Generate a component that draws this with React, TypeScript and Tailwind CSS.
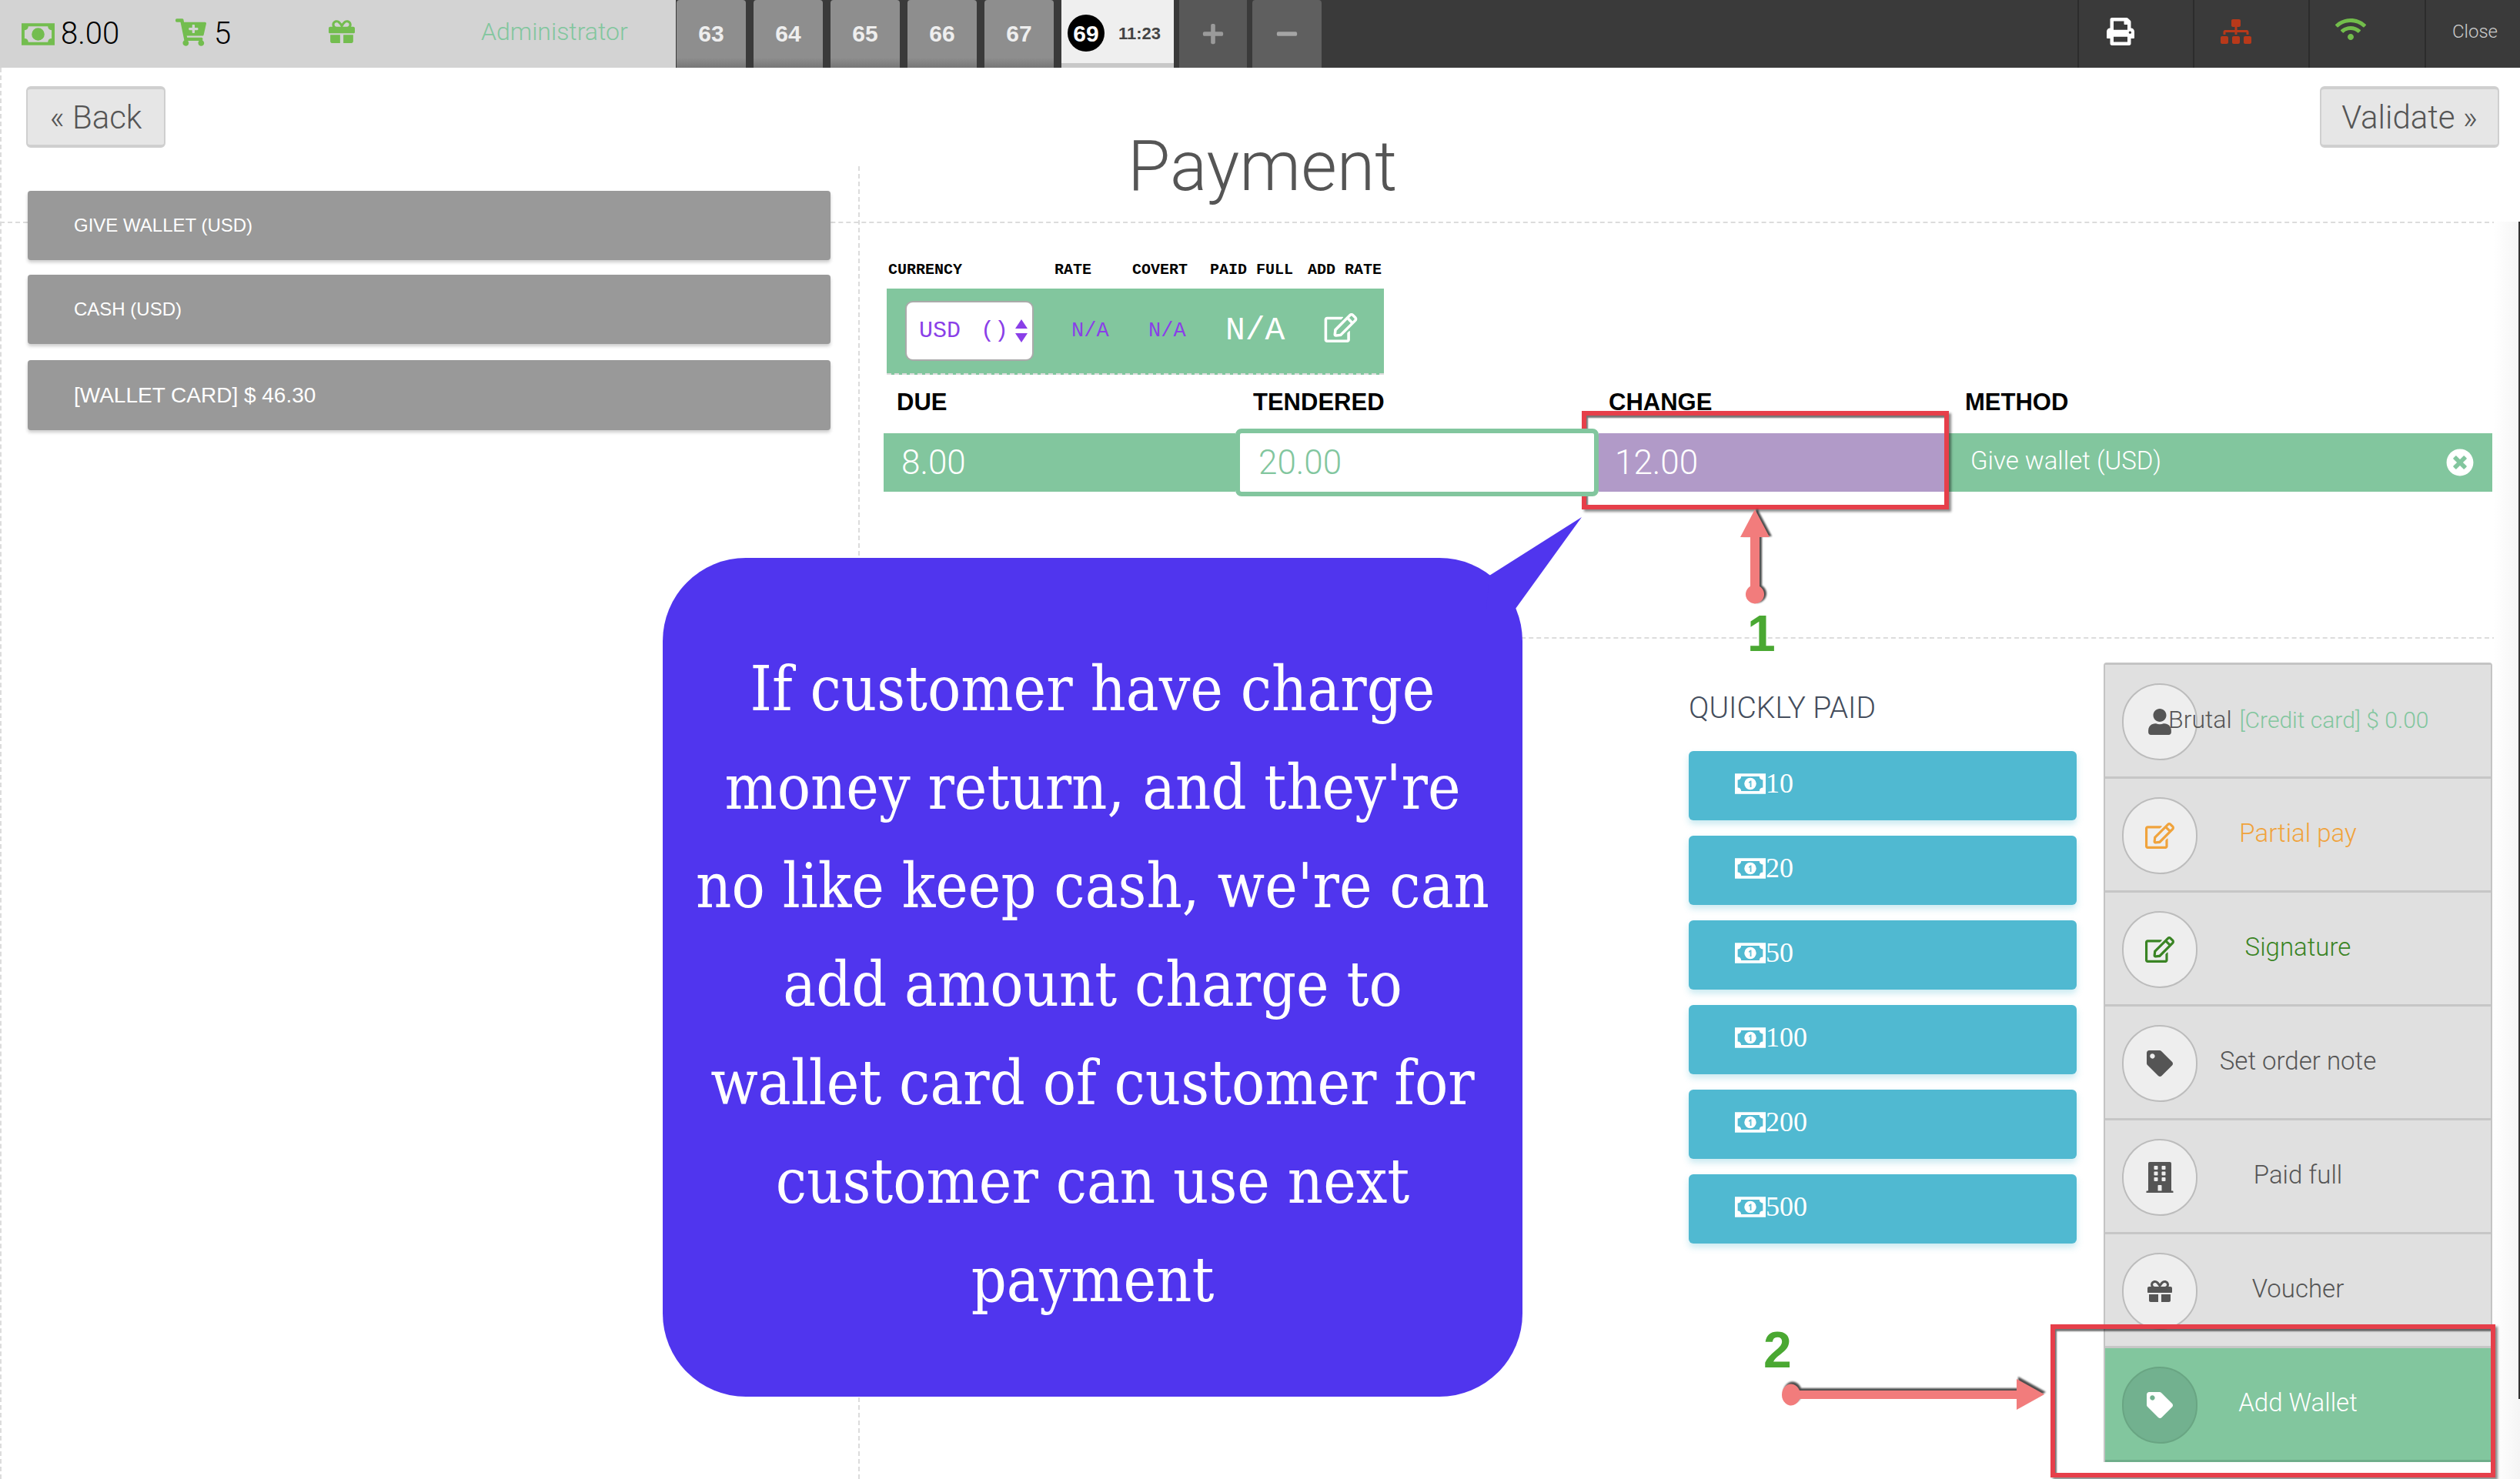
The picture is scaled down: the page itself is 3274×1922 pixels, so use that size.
import {
  FaCartPlus,
  FaGift,
  FaPrint,
  FaSitemap,
  FaWifi,
  FaRegEdit,
  FaTag,
  FaUser,
  FaBuilding,
  FaTimesCircle,
  FaPlus,
  FaMinus,
} from "react-icons/fa";

const TABS = ["63", "64", "65", "66", "67"];
const QUICK = ["10", "20", "50", "100", "200", "500"];
const BUBBLE_LINES = [
  "If customer have charge",
  "money return, and they're",
  "no like keep cash, we're can",
  "add amount charge to",
  "wallet card of customer for",
  "customer can use next",
  "payment",
];
const SANS = '"Liberation Sans", Arial, sans-serif';

function CashIcon({ className, mark = "#fff" }: { className?: string; mark?: string }) {
  return (
    <svg viewBox="0 0 44 29" className={className} fill="currentColor">
      <path
        fillRule="evenodd"
        d="M0 0h44v29H0zM9 4c0 3-2 5-5 5v11c3 0 5 2 5 5h26c0-3 2-5 5-5V9c-3 0-5-2-5-5zM22 6a8.5 8.5 0 1 0 0 17a8.5 8.5 0 1 0 0-17z"
      />
      <path d="M19.8 12l2.4-2h1.4v9.4h-2v-6.6l-1.8 1.2z" fill={mark} opacity="0.9" />
    </svg>
  );
}

function ActionRow({
  icon,
  children,
  active,
}: {
  icon: React.ReactNode;
  children: React.ReactNode;
  active?: boolean;
}) {
  return (
    <div
      className={`relative flex h-[148px] shrink-0 items-center justify-center border-b-[3px] pb-[4px] text-[33px] ${
        active
          ? "border-[#6fae8b] bg-[#82c69e] text-white"
          : "border-[#c6c6c6] bg-[#e0e0e0] text-[#555]"
      }`}
    >
      <div
        className={`absolute left-[22px] top-[24px] flex h-[100px] w-[98px] items-center justify-center rounded-full border-2 ${
          active ? "border-[#69a583] bg-[#72b18f]" : "border-[#bcbcbc] bg-[#eeeeee]"
        }`}
      >
        {icon}
      </div>
      {children}
    </div>
  );
}

export default function App() {
  return (
    <div
      className="relative h-[1922px] w-[3274px] overflow-hidden bg-white font-light text-[#555]"
      style={{ fontFamily: '"Roboto", "Liberation Sans", sans-serif' }}
    >
      {/* Top bar */}
      <header className="flex h-[88px] bg-[#3a3a3a]">
        <div className="flex w-[878px] shrink-0 items-center bg-[#d3d3d3] pb-[6px]">
          <CashIcon className="ml-[28px] mt-[6px] h-[29px] w-[43px] text-[#73bd4f]" mark="#73bd4f" />
          <span className="ml-[8px] mt-[6px] w-[149px] text-[40px] text-black">8.00</span>
          <FaCartPlus className="mt-[2px] h-[36px] w-[40px] text-[#73bd4f]" />
          <span className="ml-[10px] mt-[6px] w-[149px] text-[40px] text-black">5</span>
          <FaGift className="h-[34px] w-[34px] text-[#73bd4f]" />
          <span className="ml-[164px] text-[32px] text-[#82c69e]">Administrator</span>
        </div>
        <div className="ml-[1px] flex gap-[10px]" style={{ fontFamily: SANS }}>
          {TABS.map((t) => (
            <div
              key={t}
              className="flex w-[90px] items-center justify-center rounded-t-[4px] bg-[linear-gradient(#8e8e8e_85%,#777)] pb-[2px] text-[30px] font-bold text-[#eee]"
            >
              {t}
            </div>
          ))}
          <div className="flex w-[146px] items-center border-b-[6px] border-[#c8c8c8] bg-[#efefef] pl-[8px] pt-[4px]">
            <span className="flex h-[48px] w-[48px] items-center justify-center rounded-full bg-black text-[30px] font-bold text-white">
              69
            </span>
            <span className="ml-[18px] text-[22px] font-bold text-[#444]">11:23</span>
          </div>
        </div>
        <div className="ml-[7px] flex gap-[7px]">
          <div className="flex w-[88px] items-center justify-center bg-[#585858] text-[#9a9a9a]">
            <FaPlus className="h-[30px] w-[30px]" />
          </div>
          <div className="flex w-[90px] items-center justify-center rounded-t-[4px] bg-[#5f5f5f] text-[#a5a5a5]">
            <FaMinus className="h-[30px] w-[30px]" />
          </div>
        </div>
        <div className="ml-auto flex">
          <div className="flex w-[150px] items-center border-l-2 border-[#2c2c2c] pb-[6px] pl-[34px]">
            <FaPrint className="h-[36px] w-[40px] text-white" />
          </div>
          <div className="flex w-[150px] items-center border-l-2 border-[#2c2c2c] pb-[6px] pl-[34px]">
            <FaSitemap className="h-[36px] w-[40px] text-[#b8391a]" />
          </div>
          <div className="flex w-[151px] items-center border-l-2 border-[#2c2c2c] pb-[12px] pl-[30px]">
            <FaWifi className="h-[32px] w-[46px] text-[#72bd4b]" />
          </div>
          <div className="flex w-[124px] items-center border-l-2 border-[#2c2c2c] pb-[6px] pl-[34px] text-[24px] text-[#ccc]">
            Close
          </div>
        </div>
      </header>

      {/* Heading row */}
      <div className="relative flex h-[202px] items-start justify-between border-b-2 border-dashed border-[#dcdcdc] pl-[34px] pr-[27px] pt-[24px]">
        <button className="flex h-[80px] w-[181px] items-center justify-center rounded-[6px] border-2 border-y-4 border-[#cfcfcf] bg-[#e6e6e6] text-[42px] text-[#555]">
          « Back
        </button>
        <h1 className="absolute left-[1465px] top-[79px] text-[90px] font-light leading-[100px] text-[#555]">
          Payment
        </h1>
        <button className="flex h-[80px] w-[233px] items-center justify-center rounded-[6px] border-2 border-y-4 border-[#cfcfcf] bg-[#e6e6e6] text-[42px] text-[#555]">
          Validate »
        </button>
      </div>

      {/* Body */}
      <div className="flex">
        <aside
          className="relative z-10 -mt-[42px] flex w-[1115px] shrink-0 flex-col pl-[36px] pr-[36px] font-normal"
          style={{ fontFamily: SANS }}
        >
          <div className="flex h-[90px] items-center rounded-[4px] bg-[#999] pl-[60px] text-[24px] text-white shadow-[0_3px_4px_rgba(0,0,0,0.2)]">
            GIVE WALLET (USD)
          </div>
          <div className="mt-[19px] flex h-[90px] items-center rounded-[4px] bg-[#999] pl-[60px] text-[24px] text-white shadow-[0_3px_4px_rgba(0,0,0,0.2)]">
            CASH (USD)
          </div>
          <div className="mt-[21px] flex h-[91px] items-center rounded-[4px] bg-[#999] pl-[60px] text-[28px] text-white shadow-[0_3px_4px_rgba(0,0,0,0.2)]">
            [WALLET CARD] $ 46.30
          </div>
        </aside>

        <main className="min-w-0 flex-1">
          <section className="h-[540px] border-b-2 border-dashed border-[#dcdcdc] pl-[33px] pr-[36px]">
            {/* Currency */}
            <div
              className="ml-[5px] flex pt-[52px] text-[20px] font-bold leading-[18px] text-black"
              style={{ fontFamily: '"Liberation Mono", monospace' }}
            >
              <span className="ml-[1px] w-[216px]">CURRENCY</span>
              <span className="w-[101px]">RATE</span>
              <span className="w-[101px]">COVERT</span>
              <span className="w-[127px]">PAID FULL</span>
              <span>ADD RATE</span>
            </div>
            <div
              className="ml-[4px] mt-[15px] flex h-[112px] w-[646px] items-center border-b-2 border-dashed border-[#dcdcdc] bg-[#82c69e] pl-[24px] font-normal text-[#8a3fe8]"
              style={{ fontFamily: '"Liberation Mono", monospace' }}
            >
              <div className="relative flex h-[78px] w-[167px] shrink-0 items-center rounded-[10px] border-2 border-[#aaa] bg-white pl-[16px] text-[30px]">
                <span className="w-[84px]">USD</span>
                <span className="-ml-[4px]">()</span>
                <div className="absolute left-[141px] top-[22px] flex flex-col gap-[6px]">
                  <span className="h-0 w-0 border-x-[8px] border-b-[12px] border-x-transparent border-b-[#8a3fe8]" />
                  <span className="h-0 w-0 border-x-[8px] border-t-[12px] border-x-transparent border-t-[#8a3fe8]" />
                </div>
              </div>
              <span className="ml-[49px] w-[100px] text-[27px]">N/A</span>
              <span className="w-[100px] text-[27px]">N/A</span>
              <span className="w-[128px] text-[43px] text-white">N/A</span>
              <FaRegEdit className="-mt-[8px] h-[38px] w-[44px] text-white" />
            </div>

            {/* Payment line */}
            <div
              className="mt-[18px] grid grid-cols-[466px_462px_463px_1fr] pl-[14px] text-[31px] font-bold leading-[36px] text-black"
              style={{ fontFamily: SANS }}
            >
              <span className="ml-[3px]">DUE</span>
              <span>TENDERED</span>
              <span>CHANGE</span>
              <span>METHOD</span>
            </div>
            <div className="mt-[16px] flex h-[88px] w-[2090px] items-center text-[44px]">
              <div className="flex h-[76px] w-[457px] items-center bg-[#82c69e] pl-[23px] text-white">8.00</div>
              <div className="z-10 flex h-[88px] w-[472px] items-center rounded-[8px] border-[6px] border-[#82c69e] bg-white pl-[24px] text-[#82c69e]">
                20.00
              </div>
              <div className="flex h-[76px] w-[450px] items-center bg-[#b19ac8] pl-[21px] text-white">12.00</div>
              <div className="flex h-[76px] flex-1 items-center justify-between bg-[#82c69e] pb-[4px] pl-[33px] pr-[24px] text-[33px] text-white">
                Give wallet (USD)
                <FaTimesCircle className="mt-[4px] h-[36px] w-[36px]" />
              </div>
            </div>
          </section>

          <section className="flex pl-[1079px]">
            <div className="w-[504px] shrink-0">
              <h2 className="mt-[70px] text-[39px] leading-[40px] text-[#444d5c]">QUICKLY PAID</h2>
              <div className="mt-[36px] flex flex-col gap-[20px]">
                {QUICK.map((q) => (
                  <div
                    key={q}
                    className="flex h-[90px] items-center rounded-[6px] bg-[#50b9d1] pb-[6px] pl-[60px] text-[36px] font-normal text-white shadow-[0_5px_8px_rgba(80,185,209,0.3)]"
                    style={{ fontFamily: '"Liberation Serif", serif' }}
                  >
                    <CashIcon className="h-[27px] w-[40px]" mark="#50b9d1" />
                    {q}
                  </div>
                ))}
              </div>
            </div>
            <div className="ml-[35px] mt-[31px] flex w-[505px] shrink-0 flex-col rounded-t-[4px] border-x-2 border-t-[3px] border-[#c4c4c4] bg-[#e0e0e0]">
              <ActionRow icon={<FaUser className="h-[34px] w-[34px] text-[#555]" />}>
                <span className="absolute left-[82px] top-[53px] whitespace-nowrap text-[32px] leading-[36px]">
                  Brutal <span className="ml-[2px] text-[30px] text-[#82c69e]">[Credit card] $ 0.00</span>
                </span>
              </ActionRow>
              <ActionRow icon={<FaRegEdit className="h-[34px] w-[38px] text-[#f0a33c]" />}>
                <span className="text-[#f0a33c]">Partial pay</span>
              </ActionRow>
              <ActionRow icon={<FaRegEdit className="h-[34px] w-[38px] text-[#3a8424]" />}>
                <span className="text-[#3a8424]">Signature</span>
              </ActionRow>
              <ActionRow icon={<FaTag className="h-[34px] w-[34px] text-[#555]" />}>Set order note</ActionRow>
              <ActionRow icon={<FaBuilding className="h-[40px] w-[36px] text-[#555]" />}>Paid full</ActionRow>
              <ActionRow icon={<FaGift className="h-[32px] w-[34px] text-[#555]" />}>Voucher</ActionRow>
              <ActionRow active icon={<FaTag className="h-[34px] w-[34px] text-white" />}>
                Add Wallet
              </ActionRow>
            </div>
          </section>
        </main>
      </div>

      {/* Column dividers and page scroll strip */}
      <div className="absolute bottom-0 left-0 top-[88px] border-l-2 border-dashed border-[#dcdcdc]" />
      <div className="absolute bottom-0 left-[1115px] top-[216px] border-l-2 border-dashed border-[#dcdcdc]" />
      <div className="absolute right-0 top-[288px] h-[1634px] w-[34px] bg-[linear-gradient(90deg,#fff,#f5f5f5)]" />
      <div className="absolute right-0 top-[288px] h-[1530px] w-[2px] bg-[#333]" />

      {/* Speech bubble */}
      <div
        className="absolute left-[861px] top-[725px] flex h-[1090px] w-[1117px] flex-col items-center rounded-[108px] bg-[#5035ee] pt-[107px] text-[80px] font-normal leading-[128px] text-white"
        style={{ fontFamily: '"DejaVu Serif Condensed", "DejaVu Serif", serif', fontStretch: "condensed" }}
      >
        <svg className="absolute left-[1070px] -top-[53px]" width="130" height="125" viewBox="1931 672 130 125" fill="#5035ee">
          <polygon points="1935,748 2055,672 2055,672 1969,791 1931,791" />
        </svg>
        {BUBBLE_LINES.map((line) => (
          <div key={line} className="whitespace-nowrap">
            {line}
          </div>
        ))}
      </div>

      {/* Callouts */}
      <div className="absolute left-[2055px] top-[534px] h-[128px] w-[477px] border-[6px] border-[#e63f4a] shadow-[3px_3px_3px_rgba(0,0,0,0.45),inset_2px_3px_2px_rgba(0,0,0,0.55)]" />
      <div className="absolute left-[2664px] top-[1721px] h-[199px] w-[578px] border-[6px] border-[#e63f4a] shadow-[3px_3px_3px_rgba(0,0,0,0.45),inset_2px_3px_2px_rgba(0,0,0,0.55)]" />

      <svg
        className="absolute left-[2255px] top-[655px] drop-shadow-[3px_-1px_1px_rgba(0,0,0,0.7)]"
        width="60"
        height="135"
        viewBox="2255 655 60 135"
        fill="#f27c7c"
      >
        <path d="M2280 662l-19 36h13v64a12 12 0 1 0 12 0v-64h13z" />
      </svg>
      <svg
        className="absolute left-[2305px] top-[1780px] drop-shadow-[2px_-3px_1px_rgba(0,0,0,0.7)]"
        width="360"
        height="60"
        viewBox="2305 1780 360 60"
        fill="#f27c7c"
      >
        <path d="M2338 1807h282v-15l36 20-36 20v-14h-282a12 14 0 1 1 0-11z" />
      </svg>

      <div
        className="absolute left-[2270px] top-[785px] text-[66px] font-bold leading-[76px] text-[#4aa832]"
        style={{ fontFamily: SANS }}
      >
        1
      </div>
      <div
        className="absolute left-[2291px] top-[1716px] text-[66px] font-bold leading-[76px] text-[#4aa832]"
        style={{ fontFamily: SANS }}
      >
        2
      </div>
    </div>
  );
}
